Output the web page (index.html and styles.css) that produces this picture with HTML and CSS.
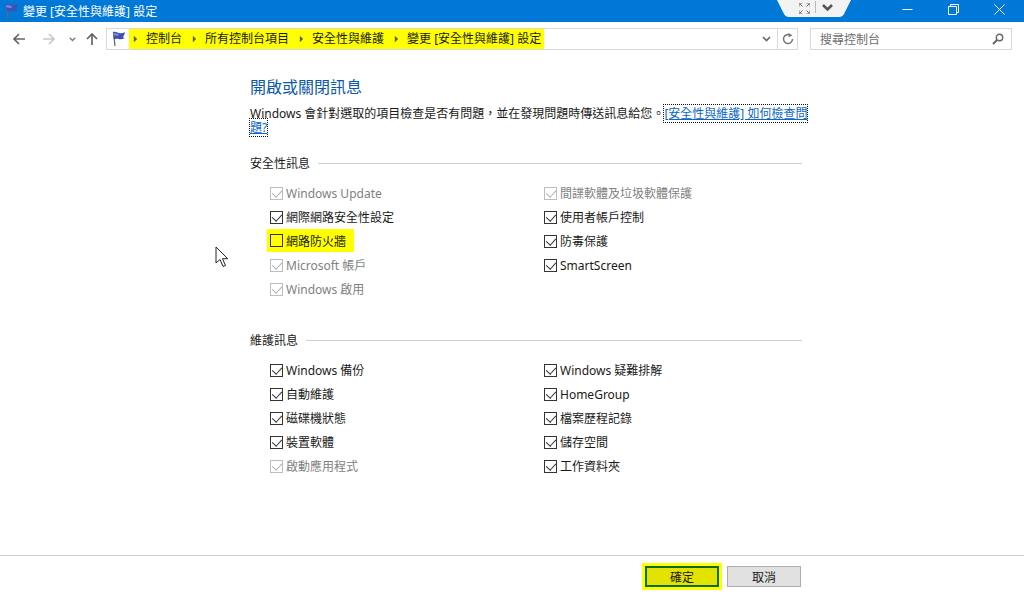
FILE: index.html
```html
<!DOCTYPE html>
<html lang="zh-Hant">
<head>
<meta charset="utf-8">
<title>變更 [安全性與維護] 設定</title>
<link rel="stylesheet" href="styles.css">
</head>
<body>
<svg class="defs" width="0" height="0" aria-hidden="true">
  <symbol id="flag" viewBox="0 0 16 16">
    <path d="M3.500 1.500 5 15" stroke="#6b6b6b" stroke-width="1.300" fill="none"/>
    <path d="M3 1c3-.8 5 1.200 7.500 1.200 1.500 0 3-.4 4.500-1-.4 2-1.200 3.500-2 4.500.6.800 1 1.200 1.500 1.600-2 1.100-4 1.300-6 .7-1.500-.4-3-.3-4.600.3z" fill="#3f51b5"/>
    <path d="M3.200 2c2.500-.5 4 .8 6 1.100L8 5 3.500 4.500z" fill="#7986d8"/>
  </symbol>
  <symbol id="chev" viewBox="0 0 6 8">
    <path d="M1 0l4 4-4 4z" fill="#5f5f3a"/>
  </symbol>
</svg>

<header class="titlebar">
  <svg class="title-flag"><use href="#flag"/></svg>
  <span class="title-text">變更 [安全性與維護] 設定</span>
  <div class="tab">
    <svg class="tab-bg" viewBox="0 0 74 17" aria-hidden="true"><path d="M0 0h74l-7 14q-1.500 3-4 3H11q-2.500 0-4-3z" fill="#f3f3f3"/></svg>
    <svg class="tab-icon expand" viewBox="0 0 11 11" aria-hidden="true"><path d="M0 3.500V0h3.500M7.500 0H11v3.500M11 7.500V11H7.500M3.500 11H0V7.500M1 1l2.500 2.500M10 1 7.500 3.500M10 10 7.500 7.500M1 10l2.500-2.500" stroke="#666" fill="none"/></svg>
    <i class="tab-sep"></i>
    <svg class="tab-icon caret" viewBox="0 0 11 7" aria-hidden="true"><path d="M1 1l4.500 4.500L10 1" stroke="#555" stroke-width="2.500" fill="none"/></svg>
  </div>
  <div class="winbtns">
    <span class="winbtn"><svg viewBox="0 0 11 11" aria-hidden="true"><path d="M.5 5.500h10" stroke="#fff"/></svg></span>
    <span class="winbtn"><svg viewBox="0 0 11 11" aria-hidden="true"><path d="M.5 2.500h8v8h-8zM2.500 2.500v-2h8v8h-2" stroke="#fff" fill="none"/></svg></span>
    <span class="winbtn"><svg viewBox="0 0 11 11" aria-hidden="true"><path d="M.5.500l10 10M10.500.500l-10 10" stroke="#fff"/></svg></span>
  </div>
</header>

<nav class="navbar">
  <svg class="nav-icon" viewBox="0 0 14 14" aria-hidden="true"><path d="M13 7H2M7 2 2 7l5 5" stroke="#666" stroke-width="1.700" fill="none"/></svg>
  <svg class="nav-icon fwd" viewBox="0 0 14 14" aria-hidden="true"><path d="M1 7h11M7 2l5 5-5 5" stroke="#c8c8c8" stroke-width="1.700" fill="none"/></svg>
  <svg class="nav-mini" viewBox="0 0 7 5" aria-hidden="true"><path d="M.8.800 3.500 3.500 6.200.800" stroke="#777" stroke-width="1.300" fill="none"/></svg>
  <svg class="nav-icon up" viewBox="0 0 14 14" aria-hidden="true"><path d="M7 13V2M2 7l5-5 5 5" stroke="#666" stroke-width="1.700" fill="none"/></svg>
  <div class="address">
    <svg class="addr-flag"><use href="#flag"/></svg>
    <div class="crumbs">
      <svg class="chev"><use href="#chev"/></svg><span>控制台</span>
      <svg class="chev"><use href="#chev"/></svg><span>所有控制台項目</span>
      <svg class="chev"><use href="#chev"/></svg><span>安全性與維護</span>
      <svg class="chev"><use href="#chev"/></svg><span>變更 [安全性與維護] 設定</span>
    </div>
    <svg class="addr-drop" viewBox="0 0 9 6" aria-hidden="true"><path d="M1 1l3.500 3.500L8 1" stroke="#666" stroke-width="1.600" fill="none"/></svg>
    <span class="refresh"><svg viewBox="0 0 12 12" aria-hidden="true"><path d="M8.500 2.300A4.500 4.500 0 1 0 10.500 6" stroke="#777" stroke-width="1.500" fill="none"/><path d="M6.500 0v4.300L10.500 2.500z" fill="#777"/></svg></span>
  </div>
  <div class="search">
    <span>搜尋控制台</span>
    <svg viewBox="0 0 12 12" aria-hidden="true"><circle cx="7.500" cy="4.500" r="3.200" stroke="#666" stroke-width="1.400" fill="none"/><path d="M5 7 1 11" stroke="#666" stroke-width="2"/></svg>
  </div>
</nav>

<main class="content">
  <h1>開啟或關閉訊息</h1>
  <p class="desc">Windows 會針對選取的項目檢查是否有問題，並在發現問題時傳送訊息給您。<a href="#">[安全性與維護] 如何檢查問題?</a></p>

  <div class="legend legend-first"><span>安全性訊息</span><i></i></div>
  <div class="checks checks-first">
    <label class="chk off"><b class="box on"></b>Windows Update</label>
    <label class="chk off"><b class="box on"></b>間諜軟體及垃圾軟體保護</label>
    <label class="chk"><b class="box on"></b>網際網路安全性設定</label>
    <label class="chk"><b class="box on"></b>使用者帳戶控制</label>
    <label class="chk mark"><b class="box"></b>網路防火牆</label>
    <label class="chk"><b class="box on"></b>防毒保護</label>
    <label class="chk off"><b class="box on"></b>Microsoft 帳戶</label>
    <label class="chk"><b class="box on"></b>SmartScreen</label>
    <label class="chk off"><b class="box on"></b>Windows 啟用</label>
  </div>

  <div class="legend legend-second"><span>維護訊息</span><i></i></div>
  <div class="checks checks-second">
    <label class="chk"><b class="box on"></b>Windows 備份</label>
    <label class="chk"><b class="box on"></b>Windows 疑難排解</label>
    <label class="chk"><b class="box on"></b>自動維護</label>
    <label class="chk"><b class="box on"></b>HomeGroup</label>
    <label class="chk"><b class="box on"></b>磁碟機狀態</label>
    <label class="chk"><b class="box on"></b>檔案歷程記錄</label>
    <label class="chk"><b class="box on"></b>裝置軟體</label>
    <label class="chk"><b class="box on"></b>儲存空間</label>
    <label class="chk off"><b class="box on"></b>啟動應用程式</label>
    <label class="chk"><b class="box on"></b>工作資料夾</label>
  </div>
</main>

<footer class="footer">
  <button class="btn primary">確定</button>
  <button class="btn">取消</button>
</footer>

<svg class="cursor" viewBox="0 0 14 22" aria-hidden="true"><path d="M1 1v16l4-3.500 3 7 2.500-1-3-6.800h5.200z" fill="#fff" stroke="#222" stroke-width="1"/></svg>
</body>
</html>
```
FILE: styles.css
```css
* { box-sizing: border-box; }
html, body { margin: 0; height: 615px; overflow: hidden; }
body {
  background: #fff;
  color: #1a1a1a;
  font: 12px "Noto Sans", "Noto Sans CJK TC", sans-serif;
  position: relative;
}
.defs { position: absolute; }

.titlebar {
  height: 22px;
  background: #0078d7;
  color: #fff;
  display: flex;
  align-items: center;
  padding-left: 3px;
  position: relative;
}
.title-flag { width: 16px; height: 16px; flex: none; }
.title-text { margin-left: 4px; font-size: 12px; }
.tab {
  position: absolute;
  left: 777px;
  top: 0;
  width: 74px;
  height: 17px;
  display: flex;
  align-items: center;
  padding-left: 22px;
}
.tab-bg { position: absolute; left: 0; top: 0; width: 74px; height: 17px; }
.tab-icon { position: relative; }
.expand { width: 11px; height: 11px; margin-top: -1px; }
.tab-sep { position: relative; width: 1px; height: 12px; background: #bbb; margin: -4px 5px 0 5px; }
.caret { width: 11px; height: 7px; margin-top: -2px; margin-left: 1px; }
.winbtns { margin-left: auto; margin-right: 2px; display: flex; }
.winbtn { width: 46px; height: 22px; display: flex; align-items: center; justify-content: center; }
.winbtn svg { width: 11px; height: 11px; margin-top: -4px; }

.navbar {
  height: 32px;
  display: flex;
  align-items: center;
  padding: 0 12px;
  margin-top: 1px;
}
.nav-icon { width: 14px; height: 14px; flex: none; }
.fwd { margin-left: 16px; }
.nav-mini { width: 7px; height: 5px; margin-left: 13px; flex: none; }
.up { margin-left: 9px; }
.address {
  margin-left: 7px;
  width: 692px;
  height: 22px;
  border: 1px solid #d9d9d9;
  display: flex;
  align-items: center;
  flex: none;
}
.addr-flag { width: 16px; height: 16px; margin: 0 3px; flex: none; }
.crumbs {
  display: flex;
  align-items: center;
  height: 20px;
  background: #ffff00;
  padding: 0 3px 0 4px;
  color: #1a1a1a;
}
.chev { width: 5px; height: 8px; margin-right: 8px; flex: none; }
.crumbs span { margin-right: 10px; padding-bottom: 2px; }
.crumbs span:last-child { margin-right: 0; }
.addr-drop { width: 9px; height: 6px; margin-left: auto; margin-right: 6px; }
.refresh {
  width: 20px;
  height: 20px;
  border-left: 1px solid #d9d9d9;
  display: flex;
  align-items: center;
  justify-content: center;
}
.refresh svg { width: 12px; height: 12px; }
.search {
  margin-left: 12px;
  width: 202px;
  height: 22px;
  border: 1px solid #d9d9d9;
  display: flex;
  align-items: center;
  justify-content: space-between;
  padding: 0 7px 0 9px;
  color: #6d6d6d;
}
.search span { padding-bottom: 1px; }
.search svg { width: 12px; height: 12px; }

.content { padding: 22px 222px 0 250px; }
h1 {
  margin: 0;
  font-size: 16px;
  line-height: 20px;
  font-weight: 400;
  color: #0a58a8;
}
.desc { margin: 10px 0 0; line-height: 14px; width: 560px; height: 30px; }
.desc a {
  color: #0a66cc;
  border: 1px dotted #111;
  margin: 0 -1px;
  -webkit-box-decoration-break: clone;
  box-decoration-break: clone;
}
.legend { display: flex; align-items: center; height: 18px; }
.legend-first { margin-top: 17px; }
.legend-second { margin-top: 30px; }
.legend i { flex: 1; height: 1px; background: #d0d0d0; margin-left: 8px; }
.checks {
  display: grid;
  grid-template-columns: 274px 1fr;
  grid-auto-rows: 24px;
  padding-left: 20px;
}
.checks-first { margin-top: 9px; }
.checks-second { margin-top: 9px; }
.chk { display: flex; align-items: center; white-space: nowrap; }
.box {
  width: 13px;
  height: 13px;
  border: 1px solid #333;
  margin-right: 3px;
  flex: none;
}
.box.on { position: relative; }
.box.on::after {
  content: "";
  position: absolute;
  left: 3px;
  top: 0;
  width: 5px;
  height: 8px;
  border: solid #333;
  border-width: 0 1.300px 1.300px 0;
  transform: rotate(42deg);
}
.off { color: #7f7f7f; }
.off .box { border-color: #bdbdbd; }
.off .box.on::after { border-color: #b0b0b0; }
.mark { background: #ffff00; width: 87px; margin-left: -3px; padding-left: 3px; height: 23px; }

.footer {
  position: absolute;
  left: 0;
  right: 0;
  top: 555px;
  height: 60px;
  border-top: 1px solid #d0d0d0;
  display: flex;
  justify-content: flex-end;
  align-items: flex-start;
  gap: 8px;
  padding: 10px 223px 0 0;
}
.btn {
  width: 74px;
  height: 21px;
  border: 1px solid #adadad;
  background: #e1e1e1;
  font: inherit;
  color: #1a1a1a;
  padding: 0;
}
.primary {
  background: #e3e300;
  border: 2px solid #0b6b20;
  outline: 3px solid #ffff00;
}
.cursor { position: absolute; left: 215px; top: 246px; width: 14px; height: 22px; }
```
